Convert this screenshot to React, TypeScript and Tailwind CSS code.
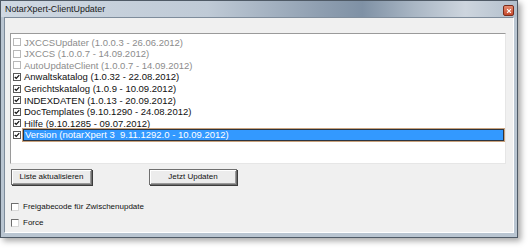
import React from 'react';

type Item = { label: string; checked: boolean; disabled?: boolean; selected?: boolean };

const items: Item[] = [
  { label: 'JXCCSUpdater (1.0.0.3 - 26.06.2012)', checked: false, disabled: true },
  { label: 'JXCCS (1.0.0.7 - 14.09.2012)', checked: false, disabled: true },
  { label: 'AutoUpdateClient (1.0.0.7 - 14.09.2012)', checked: false, disabled: true },
  { label: 'Anwaltskatalog (1.0.32 - 22.08.2012)', checked: true },
  { label: 'Gerichtskatalog (1.0.9 - 10.09.2012)', checked: true },
  { label: 'INDEXDATEN (1.0.13 - 20.09.2012)', checked: true },
  { label: 'DocTemplates (9.10.1290 - 24.08.2012)', checked: true },
  { label: 'Hilfe (9.10.1285 - 09.07.2012)', checked: true },
  { label: 'Version (notarXpert 3  9.11.1292.0 - 10.09.2012)', checked: true, selected: true },
];

const CheckMark = () => (
  <svg viewBox="0 0 8 8" className="w-[6px] h-[6px]">
    <path d="M1 4 L3 6 L7 1.5" fill="none" stroke="#111" strokeWidth="1.6" />
  </svg>
);

const ListRow: React.FC<{ item: Item }> = ({ item }) => (
  <div className="flex items-center h-[11.6px] pl-[2px]">
    <div
      className={`w-[8px] h-[8px] shrink-0 bg-white border flex items-center justify-center ${
        item.disabled ? 'border-[#b8b8b8]' : 'border-[#5a5a5a]'
      }`}
    >
      {item.checked && <CheckMark />}
    </div>
    <div
      className={`ml-[2px] h-[11.6px] flex items-center whitespace-pre pl-[1px] ${
        item.selected
          ? 'flex-1 mr-[1px] bg-[#3399ff] text-white border border-[#2c3440] shadow-[0_0_0_1px_#c9a27c]'
          : item.disabled
            ? 'text-[#8c8c8c]'
            : 'text-[#111]'
      }`}
    >
      {item.label}
    </div>
  </div>
);

const WinButton: React.FC<{ label: string; width: string }> = ({ label, width }) => (
  <button
    className={`${width} h-[16px] bg-[#ececec] border border-[#6f6f6f] shadow-[inset_1px_1px_0_#ffffff,inset_-1px_-1px_0_#9a9a9a,1px_1px_0_#3c3c3c] text-[8px] text-[#111] flex items-center justify-center`}
  >
    {label}
  </button>
);

const SmallCheck: React.FC<{ label: string }> = ({ label }) => (
  <div className="flex items-center h-[10px]">
    <div className="w-[8px] h-[8px] bg-white border border-t-[#6e6e6e] border-l-[#6e6e6e] border-r-[#d8d8d8] border-b-[#d8d8d8]" />
    <span className="ml-[4px] text-[8px] text-[#111] whitespace-nowrap">{label}</span>
  </div>
);

export default function App() {
  return (
    <div className="w-[530px] h-[250px] bg-white" style={{ fontFamily: '"Liberation Sans", Arial, sans-serif' }}>
      <div className="w-[518px] h-[238px] flex flex-col border border-[#4f5a66] bg-[#b9c5d1] shadow-[3px_3px_6px_rgba(0,0,0,0.35)]">
        {/* title bar */}
        <div className="h-[16px] flex items-center justify-between pl-[4px] pr-[3px] bg-[linear-gradient(to_right,#cfd8e2_0%,#bfcad6_40%,#8e9eb0_62%,#7f91a5_70%,#a9b6c4_80%,#cdd5de_90%,#b2bfcc_100%)]">
          <span className="text-[8.9px] text-[#1a1a1a] leading-none">NotarXpert-ClientUpdater</span>
          <div className="w-[11px] h-[11px] mt-[3px] rounded-[2px] border border-[#7a2c1c] bg-[linear-gradient(to_bottom,#e58c70,#c6492c)] flex items-center justify-center">
            <svg viewBox="0 0 8 8" className="w-[6px] h-[6px]">
              <path d="M1.5 1.5 L6.5 6.5 M6.5 1.5 L1.5 6.5" stroke="#fff" strokeWidth="1.6" />
            </svg>
          </div>
        </div>

        {/* client area */}
        <div className="flex-1 mx-[3px] mb-[4px] border border-t-[#7e8c9b] border-l-[#7e8c9b] border-r-white border-b-white bg-[#f0f0f0] pl-[5px] pt-[15px] flex flex-col">
          {/* list box */}
          <div className="w-[496px] h-[131px] bg-white border border-t-[#9a9a9a] border-l-[#9a9a9a] border-r-[#e6e6e6] border-b-[#e6e6e6] pt-[2.5px] text-[9.5px] leading-none">
            {items.map((it) => (
              <ListRow key={it.label} item={it} />
            ))}
          </div>

          {/* buttons */}
          <div className="flex mt-[5px] pl-[1px]">
            <WinButton label="Liste aktualisieren" width="w-[81px]" />
            <div className="ml-[57px]">
              <WinButton label="Jetzt Updaten" width="w-[88px]" />
            </div>
          </div>

          {/* options */}
          <div className="flex flex-col gap-[6px] mt-[17px] pl-[1px]">
            <SmallCheck label="Freigabecode für Zwischenupdate" />
            <SmallCheck label="Force" />
          </div>
        </div>
      </div>
    </div>
  );
}
